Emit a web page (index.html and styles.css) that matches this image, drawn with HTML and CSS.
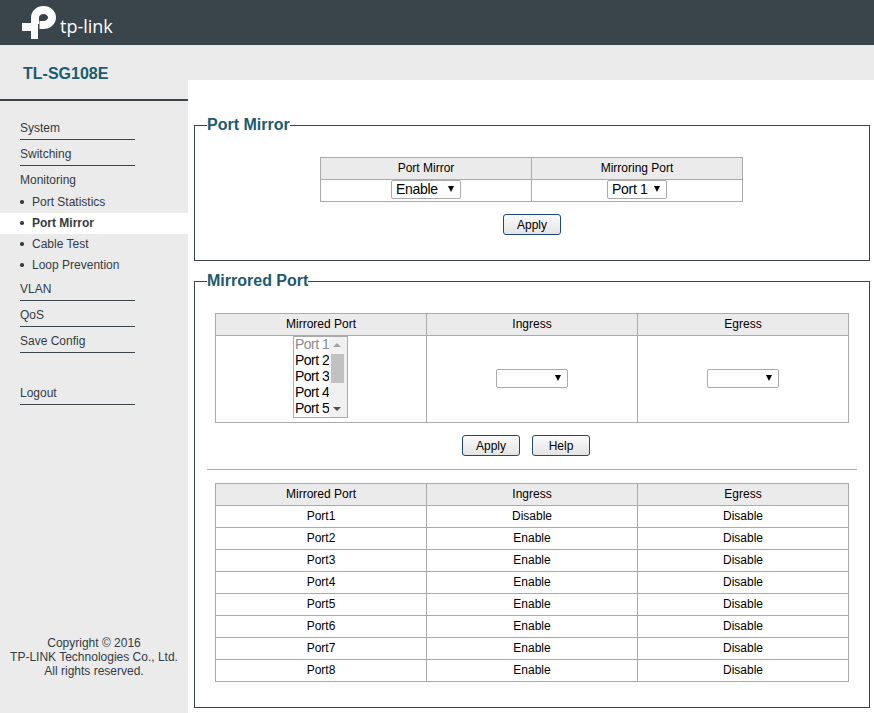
FILE: index.html
```html
<!DOCTYPE html>
<html lang="en">
<head>
<meta charset="utf-8">
<title>TL-SG108E</title>
<link rel="stylesheet" href="styles.css">
</head>
<body>
<header class="topbar">
  <div class="logo">
    <svg class="logo-mark" viewBox="0 0 34 34" width="34" height="34" aria-hidden="true">
      <path fill="#fff" d="M0 17H16V33H9V25H0Z"/>
      <path fill="none" stroke="#fff" stroke-width="8" d="M13 18V11.500A8.500 7.500 0 1 1 21.500 19H17.500"/>
    </svg>
    <span class="logo-text">tp-link</span>
  </div>
</header>
<div class="layout">
  <aside class="sidebar">
    <h1 class="model">TL-SG108E</h1>
    <nav class="nav">
      <a class="nav-item lined">System</a>
      <a class="nav-item lined">Switching</a>
      <a class="nav-item">Monitoring</a>
      <ul class="subnav">
        <li>Port Statistics</li>
        <li class="active">Port Mirror</li>
        <li>Cable Test</li>
        <li>Loop Prevention</li>
      </ul>
      <a class="nav-item lined">VLAN</a>
      <a class="nav-item lined">QoS</a>
      <a class="nav-item lined">Save Config</a>
      <a class="nav-item lined logout">Logout</a>
    </nav>
    <footer class="copyright">Copyright © 2016<br>TP-LINK Technologies Co., Ltd.<br>All rights reserved.</footer>
  </aside>
  <main class="content">
    <fieldset class="panel panel-mirror">
      <legend>Port Mirror</legend>
      <table class="grid grid-small">
        <tr><th>Port Mirror</th><th>Mirroring Port</th></tr>
        <tr>
          <td class="tight"><span class="dropdown w70">Enable</span></td>
          <td class="tight"><span class="dropdown w60">Port 1</span></td>
        </tr>
      </table>
      <div class="actions actions-first"><button class="btn" type="button">Apply</button></div>
    </fieldset>
    <fieldset class="panel panel-mirrored">
      <legend>Mirrored Port</legend>
      <table class="grid grid-wide grid-config">
        <tr><th>Mirrored Port</th><th>Ingress</th><th>Egress</th></tr>
        <tr class="config-row">
          <td>
            <div class="listbox">
              <ul class="listbox-items">
                <li class="disabled">Port 1</li>
                <li>Port 2</li>
                <li>Port 3</li>
                <li>Port 4</li>
                <li>Port 5</li>
              </ul>
              <div class="scroll">
                <span class="arrow-up"></span>
                <span class="thumb"></span>
                <span class="arrow-down"></span>
              </div>
            </div>
          </td>
          <td><span class="dropdown w72"></span></td>
          <td><span class="dropdown w72"></span></td>
        </tr>
      </table>
      <div class="actions actions-pair">
        <button class="btn" type="button">Apply</button>
        <button class="btn" type="button">Help</button>
      </div>
      <hr class="divider">
      <table class="grid grid-wide">
        <tr><th>Mirrored Port</th><th>Ingress</th><th>Egress</th></tr>
        <tr><td>Port1</td><td>Disable</td><td>Disable</td></tr>
        <tr><td>Port2</td><td>Enable</td><td>Disable</td></tr>
        <tr><td>Port3</td><td>Enable</td><td>Disable</td></tr>
        <tr><td>Port4</td><td>Enable</td><td>Disable</td></tr>
        <tr><td>Port5</td><td>Enable</td><td>Disable</td></tr>
        <tr><td>Port6</td><td>Enable</td><td>Disable</td></tr>
        <tr><td>Port7</td><td>Enable</td><td>Disable</td></tr>
        <tr><td>Port8</td><td>Enable</td><td>Disable</td></tr>
      </table>
    </fieldset>
  </main>
</div>
</body>
</html>
```
FILE: styles.css
```css
* { box-sizing: border-box; }
html, body { margin: 0; height: 713px; overflow: hidden; }
body {
  background: #ebebeb;
  font-family: "Liberation Sans", Arial, sans-serif;
  font-size: 12px;
  color: #333b46;
}
.topbar { height: 45px; background: #3a444b; padding: 6px 0 0 22px; }
.logo { display: flex; align-items: flex-start; }
.logo-mark { flex: none; }
.logo-text {
  font-family: "Open Sans", "Liberation Sans", sans-serif;
  color: #fff;
  font-size: 18px;
  line-height: 24px;
  margin: 8px 0 0 4px;
}
.layout { display: flex; height: 668px; }
.sidebar { width: 188px; flex: none; display: flex; flex-direction: column; }
.model {
  margin: 0;
  height: 56px;
  padding: 19px 0 0 23px;
  border-bottom: 2px solid #3a444b;
  font-size: 16px;
  line-height: 19px;
  color: #1c5a70;
}
.nav { display: flex; flex-direction: column; padding-top: 13px; }
.nav-item {
  height: 26px;
  width: 115px;
  margin-left: 20px;
  line-height: 26px;
  padding-top: 1px;
}
.nav-item.lined { border-bottom: 1px solid #3a444b; }
.logout { margin-top: 26px; }
.subnav { list-style: none; margin: 0; padding: 0; }
.subnav li {
  height: 21px;
  line-height: 20px;
  padding-left: 32px;
  position: relative;
}
.subnav li:last-child { height: 20px; }
.subnav li::before {
  content: "";
  position: absolute;
  left: 20px;
  top: 8px;
  width: 3.5px;
  height: 3.5px;
  border-radius: 50%;
  background: #333b46;
}
.subnav li.active { background: #fff; font-weight: bold; }
.copyright { margin-top: auto; padding-bottom: 35px; text-align: center; line-height: 14px; }
.content { flex: 1; margin-top: 35px; background: #fff; padding: 36px 4px 0 6px; min-width: 0; }
.panel {
  margin: 0;
  padding: 0;
  min-width: 0;
  border: 1px solid #3a444b;
  display: block;
}
.panel legend {
  margin-left: 12px;
  padding: 0;
  font-size: 16px;
  font-weight: bold;
  line-height: 18px;
  color: #1c5a70;
}
.panel-mirror { height: 145px; }
.panel-mirrored { height: 436px; margin-top: 11px; }
.grid { border-collapse: collapse; table-layout: fixed; background: #fff; color: #000; }
.grid th, .grid td {
  border: 1px solid #aaa;
  height: 22px;
  padding: 0 0 2px;
  text-align: center;
  font-weight: normal;
  font-size: 12px;
  vertical-align: middle;
}
.grid th { background: #ebebeb; }
.grid-small { width: 423px; margin: 23px 0 0 125px; }
.grid-wide { width: 634px; margin-left: 20px; }
.grid-config { margin-top: 23px; }
.grid .config-row td { height: 87px; }
.dropdown {
  display: inline-block;
  position: relative;
  height: 19px;
  border: 1px solid #aaa;
  border-radius: 2px;
  background: #fff;
  text-align: left;
  font-size: 14px;
  letter-spacing: -0.3px;
  line-height: 17px;
  padding-left: 4px;
  vertical-align: middle;
}
.dropdown::after {
  content: "";
  position: absolute;
  right: 6px;
  top: 5px;
  border-style: solid;
  border-width: 6px 3px 0;
  border-color: #000 transparent transparent;
}
.w70 { width: 70px; }
.w60 { width: 60px; }
.w72 { width: 72px; }
.actions { display: flex; justify-content: center; }
.actions-first { margin-top: 12px; }
.actions-pair { margin-top: 12px; gap: 12px; padding-right: 12px; }
.btn {
  width: 58px;
  height: 21px;
  padding: 0;
  border: 1px solid #1c4a78;
  border-radius: 3px;
  background: linear-gradient(#fafafa, #e4e4e4);
  font-family: inherit;
  font-size: 12px;
  color: #000;
}
.divider {
  margin: 13px 12px 13px 12px;
  border: 0;
  border-top: 1px solid #aaa;
  height: 0;
}
.listbox {
  display: flex;
  width: 55px;
  height: 82px;
  margin: -3px 0 0 77px;
  border: 1px solid #aaa;
  font-size: 14px;
  letter-spacing: -0.5px;
  text-align: left;
  line-height: 16px;
  overflow: hidden;
}
.listbox-items { list-style: none; margin: -1px 0 0; padding: 0 0 0 1px; flex: 1; min-width: 0; white-space: nowrap; }
.listbox-items .disabled { color: #8c8c8c; }
.scroll { width: 18px; flex: none; position: relative; background: #f1f1f1; }
.thumb { position: absolute; left: 2px; top: 17px; width: 13px; height: 29px; background: #c1c1c1; }
.arrow-up, .arrow-down { position: absolute; left: 4px; width: 0; height: 0; border-style: solid; }
.arrow-up { top: 6px; border-width: 0 4px 4px; border-color: transparent transparent #a3a3a3; }
.arrow-down { bottom: 6px; border-width: 4px 4px 0; border-color: #505050 transparent transparent; }
```
